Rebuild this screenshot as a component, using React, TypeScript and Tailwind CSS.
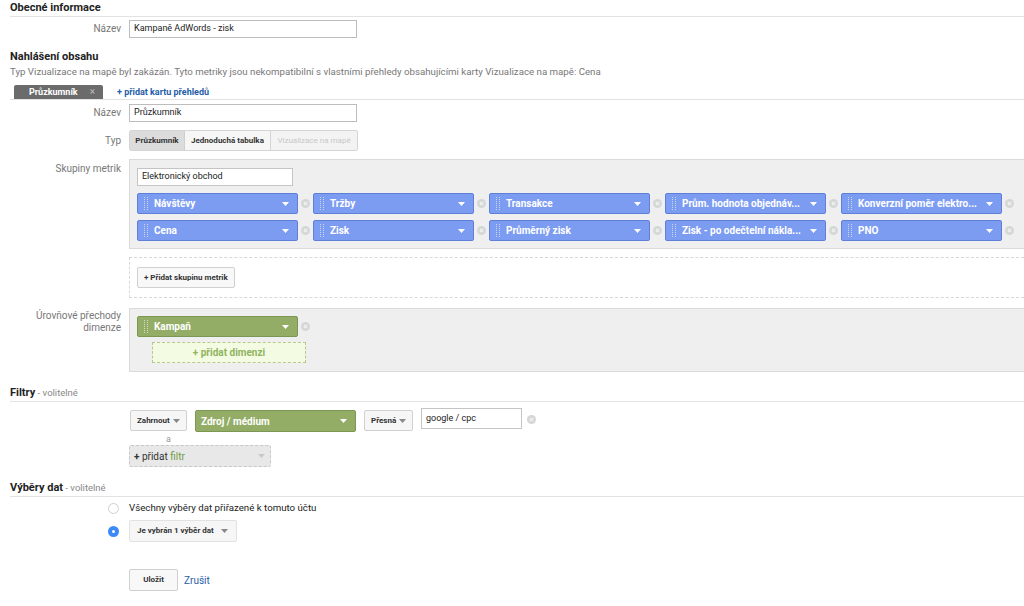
import React from "react";

const blueMetrics = [
  ["Návštěvy", "Tržby", "Transakce", "Prům. hodnota objednáv...", "Konverzní poměr elektro..."],
  ["Cena", "Zisk", "Průměrný zisk", "Zisk - po odečtelní nákla...", "PNO"],
];

const Handle = () => (
  <svg width="5" height="13" viewBox="0 0 5 13" className="shrink-0" shapeRendering="crispEdges">
    {[0, 2, 4, 6, 8, 10, 12].map((y) => (
      <g key={y}>
        <rect x="0" y={y} width="1" height="1" fill="rgba(255,255,255,0.6)" />
        <rect x="3" y={y} width="1" height="1" fill="rgba(255,255,255,0.6)" />
      </g>
    ))}
  </svg>
);

const Caret = ({ color = "#fff" }: { color?: string }) => (
  <svg width="7" height="4" viewBox="0 0 7 4" className="shrink-0">
    <path d="M0 0 L7 0 L3.5 4 Z" fill={color} />
  </svg>
);

const Remove = () => (
  <svg width="9" height="9" viewBox="0 0 9 9" className="shrink-0">
    <circle cx="4.5" cy="4.5" r="4.5" fill="#d6d6d6" />
    <path d="M2.8 2.8 L6.2 6.2 M6.2 2.8 L2.8 6.2" stroke="#f4f4f4" strokeWidth="1.1" />
  </svg>
);

const Pill = ({ text, green }: { text: string; green?: boolean }) => (
  <div
    className={
      "w-[161px] h-[21px] rounded-[2px] border flex items-center pl-[6px] pr-[8px] " +
      (green ? "bg-[#93ad67] border-[#7c9653]" : "bg-[#7c9cf1] border-[#5f7fd8]")
    }
  >
    <Handle />
    <span className="ml-[5px] flex-1 text-[10px] font-bold text-white truncate">{text}</span>
    <Caret />
  </div>
);

const GrayButton = ({ children, className = "" }: { children: React.ReactNode; className?: string }) => (
  <div
    className={
      "h-[21px] px-[6px] flex items-center whitespace-nowrap border border-[#d0d0d0] rounded-[2px] bg-[#f6f6f6] text-[8px] font-bold text-[#333] " +
      className
    }
  >
    {children}
  </div>
);

const Label = ({ children, className = "" }: { children: React.ReactNode; className?: string }) => (
  <div className={"w-[121px] shrink-0 text-right text-[10px] text-[#777] leading-[12px] " + className}>
    {children}
  </div>
);

const Heading = ({ title, note }: { title: string; note?: string }) => (
  <div className="ml-[10px] h-[17px] border-b border-[#e2e2e2] text-[11px] leading-[16px] font-bold text-[#222]">
    {title}
    {note && <span className="font-normal text-[9.5px] text-[#888]"> - {note}</span>}
  </div>
);

const TextInput = ({ value, className = "" }: { value: string; className?: string }) => (
  <div
    className={
      "h-[18px] bg-white border border-[#bdbdbd] flex items-center px-[4px] text-[9px] text-[#222] " + className
    }
  >
    {value}
  </div>
);

export default function App() {
  return (
    <div className="w-[1024px] h-[606px] overflow-hidden bg-white font-['Roboto',sans-serif] text-[#333]">
      <Heading title="Obecné informace" />
      <div className="flex mt-[3px] items-center">
        <Label>Název</Label>
        <TextInput value="Kampaně AdWords - zisk" className="ml-[8px] w-[228px]" />
      </div>

      <div className="mt-[12px] ml-[10px] text-[11px] leading-[14px] font-bold text-[#222]">Nahlášení obsahu</div>
      <div className="mt-[1px] ml-[10px] text-[9.7px] leading-[13px] text-[#777]">
        Typ Vizualizace na mapě byl zakázán. Tyto metriky jsou nekompatibilní s vlastními přehledy obsahujícími karty Vizualizace na mapě: Cena
      </div>

      <div className="mt-[7px] ml-[10px] border-b border-[#e2e2e2] flex items-end h-[15px]">
        <div className="ml-[4px] w-[89px] h-[14px] bg-[#6b6b6b] rounded-t-[2px] flex items-center pl-[15px] pr-[8px]">
          <span className="flex-1 text-[9px] font-bold text-white leading-none">Průzkumník</span>
          <span className="text-[10px] text-[#bbb] leading-none">×</span>
        </div>
        <div className="ml-[14px] h-[14px] flex items-center text-[9px] font-bold text-[#1f5ea8] leading-none">
          + přidat kartu přehledů
        </div>
      </div>

      <div className="flex mt-[4px] items-center">
        <Label>Název</Label>
        <TextInput value="Průzkumník" className="ml-[8px] w-[228px] h-[17px]" />
      </div>

      <div className="flex mt-[8px] items-center">
        <Label>Typ</Label>
        <div className="ml-[8px] flex h-[21px] border border-[#d5d5d5] rounded-[2px] bg-[#f6f6f6] text-[8px] font-bold">
          <div className="w-[55px] bg-[#dcdcdc] flex items-center justify-center border-r border-[#cfcfcf]">Průzkumník</div>
          <div className="w-[86px] flex items-center justify-center border-r border-[#d5d5d5] text-[#333]">Jednoduchá tabulka</div>
          <div className="w-[86px] flex items-center justify-center font-normal text-[#c8c8c8] bg-[#f3f3f3]">Vizualizace na mapě</div>
        </div>
      </div>

      <div className="flex mt-[8px] items-start">
        <Label className="mt-[4px]">Skupiny metrik</Label>
        <div className="ml-[8px] flex-1 flex flex-col">
          <div className="bg-[#efefef] border border-r-0 border-[#dadada] pt-[8px] pb-[7px] pl-[7px]">
            <TextInput value="Elektronický obchod" className="w-[156px] h-[17px] border-[#c4c4c4]" />
            <div className="mt-[7px] flex flex-col gap-[6px]">
              {blueMetrics.map((row, i) => (
                <div key={i} className="flex items-center">
                  {row.map((m) => (
                    <div key={m} className="flex items-center">
                      <Pill text={m} />
                      <div className="w-[15px] flex justify-center">
                        <Remove />
                      </div>
                    </div>
                  ))}
                </div>
              ))}
            </div>
          </div>
          <div className="mt-[8px] h-[41px] border border-r-0 border-dashed border-[#d8d8d8] flex items-center pl-[7px]">
            <GrayButton className="bg-[#f8f8f8]">+ Přidat skupinu metrik</GrayButton>
          </div>
          <div className="mt-[10px] bg-[#efefef] border border-r-0 border-[#dadada] pt-[7px] pb-[8px] pl-[7px]">
            <div className="flex items-center">
              <Pill text="Kampaň" green />
              <div className="w-[15px] flex justify-center">
                <Remove />
              </div>
            </div>
            <div className="mt-[5px] ml-[15px] w-[154px] h-[21px] bg-[#f3fbe2] border border-dashed border-[#b7c98f] flex items-center justify-center text-[10px] font-bold text-[#8fb35e]">
              + přidat dimenzi
            </div>
          </div>
        </div>
      </div>
      <div className="-mt-[64px] h-[64px] flex">
        <Label className="mt-[2px]">
          Úrovňové přechody
          <br />
          dimenze
        </Label>
      </div>

      <div className="mt-[13px]">
        <Heading title="Filtry" note="volitelné" />
      </div>
      <div className="ml-[130px] mt-[6px] flex items-start">
        <GrayButton className="mt-[2px] w-[57px] justify-between pr-[6px]">
          <span>Zahrnout</span>
          <Caret color="#888" />
        </GrayButton>
        <div className="ml-[8px] mt-[2px] w-[161px] h-[22px] rounded-[2px] border bg-[#93ad67] border-[#7c9653] flex items-center pl-[5px] pr-[8px]">
          <span className="flex-1 text-[10px] font-bold text-white">Zdroj / médium</span>
          <Caret />
        </div>
        <GrayButton className="ml-[8px] mt-[2px] w-[49px] justify-between">
          <span>Přesná</span>
          <Caret color="#888" />
        </GrayButton>
        <TextInput value="google / cpc" className="ml-[8px] w-[101px] h-[21px] border-[#c4c4c4]" />
        <div className="ml-[5px] mt-[7px]">
          <Remove />
        </div>
      </div>
      <div className="ml-[166px] mt-[2px] text-[9px] leading-[10px] text-[#999]">a</div>
      <div className="ml-[129px] mt-[1px] w-[142px] h-[22px] bg-[#e8e8e8] border border-dashed border-[#c8c8c8] rounded-[2px] flex items-center pl-[4px] pr-[5px]">
        <span className="flex-1 text-[10px] text-[#333]">
          <b>+</b> přidat <span className="text-[#6e9b45]">filtr</span>
        </span>
        <Caret color="#c8c8c8" />
      </div>

      <div className="mt-[13px]">
        <Heading title="Výběry dat" note="volitelné" />
      </div>
      <div className="flex items-center mt-[4px] h-[14px]">
        <div className="ml-[108px] w-[11px] h-[11px] rounded-full border border-[#cfcfcf] bg-white" />
        <span className="ml-[10px] text-[9.7px] text-[#222]">Všechny výběry dat přiřazené k tomuto účtu</span>
      </div>
      <div className="flex items-center mt-[5px]">
        <div className="ml-[108px] w-[11px] h-[11px] rounded-full bg-[#3d8af7] flex items-center justify-center">
          <div className="w-[3px] h-[3px] rounded-full bg-white" />
        </div>
        <GrayButton className="ml-[10px] w-[108px] h-[22px] justify-between border-[#e2e2e2] bg-[#f3f3f3] pl-[7px] pr-[8px]">
          <span>Je vybrán 1 výběr dat</span>
          <Caret color="#888" />
        </GrayButton>
      </div>

      <div className="flex items-center mt-[27px] ml-[129px]">
        <GrayButton className="w-[49px] h-[22px] justify-center bg-[#f8f8f8]">Uložit</GrayButton>
        <span className="ml-[6px] text-[10px] text-[#1f5ea8]">Zrušit</span>
      </div>
    </div>
  );
}
